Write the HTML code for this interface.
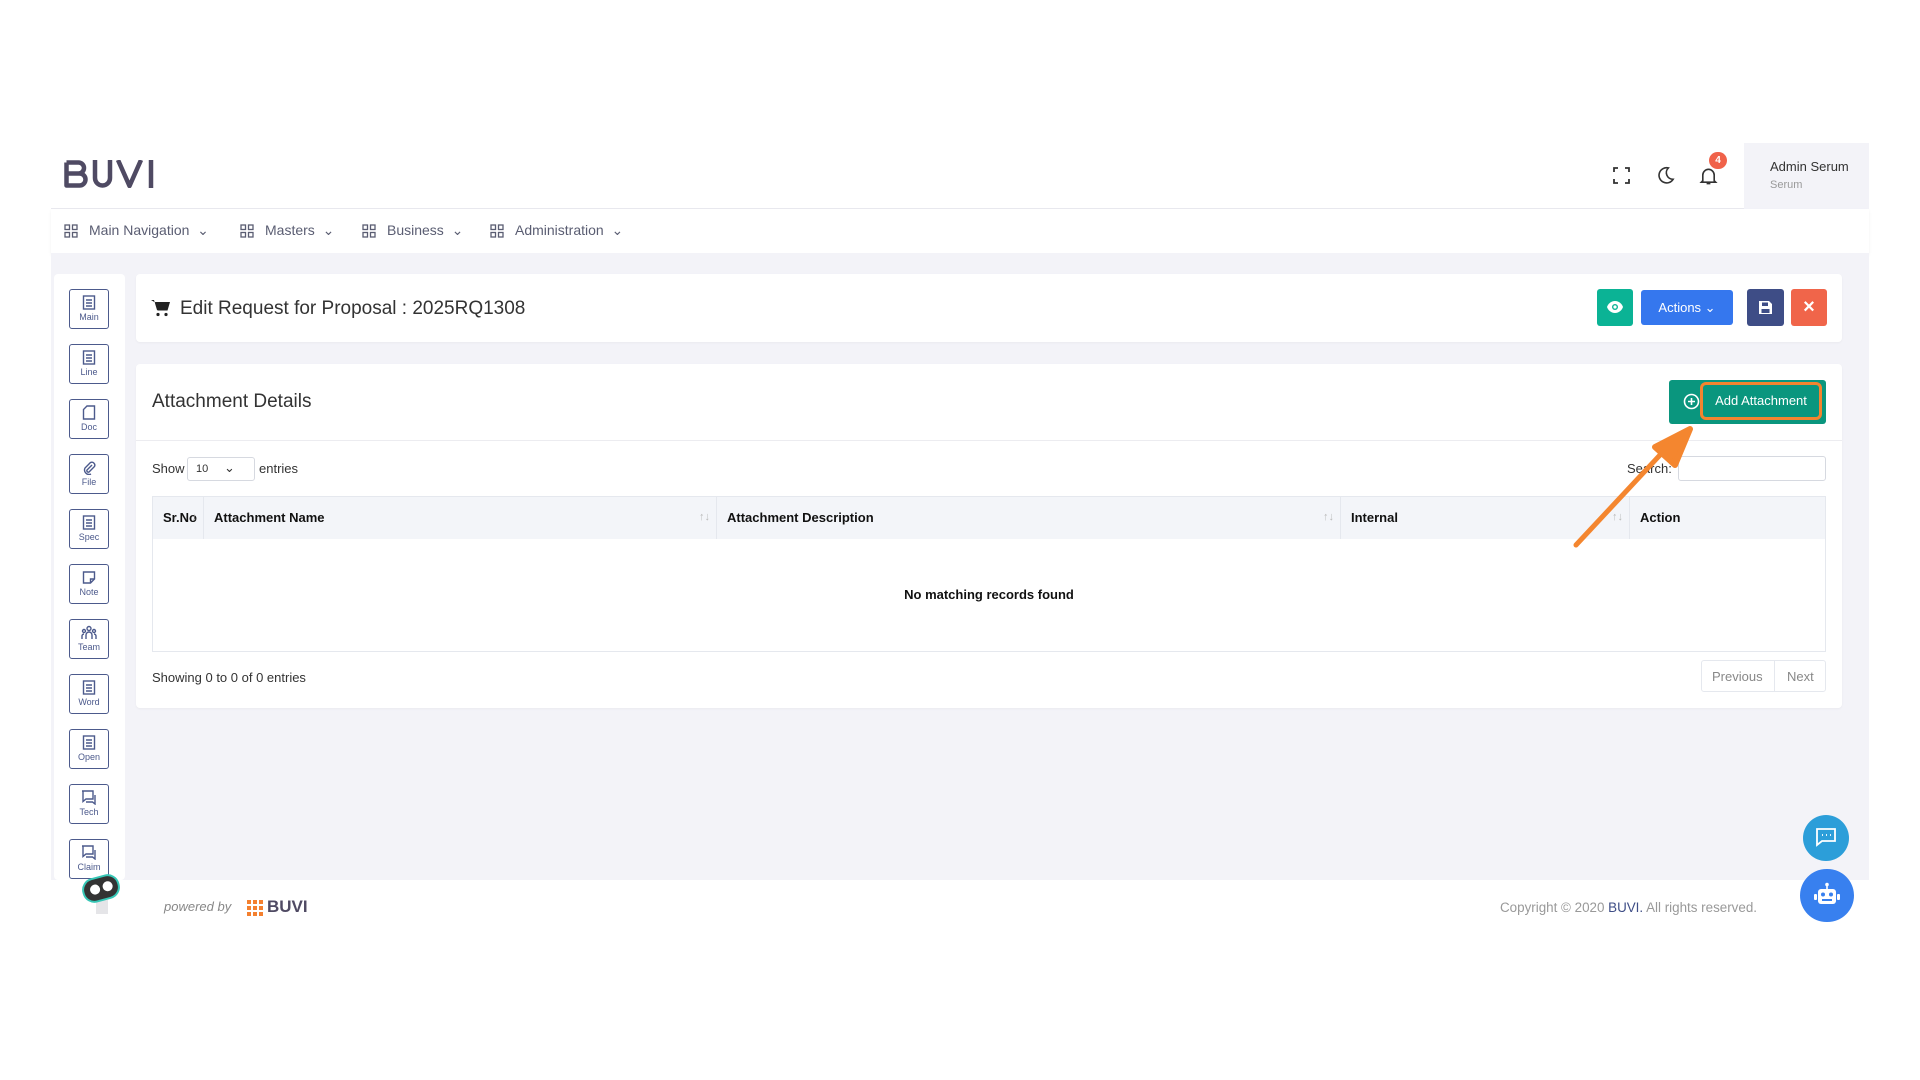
<!DOCTYPE html>
<html><head><meta charset="utf-8">
<style>
*{box-sizing:border-box;margin:0;padding:0}
body{width:1920px;height:1080px;background:#fff;font-family:"Liberation Sans",sans-serif;position:relative;overflow:hidden;color:#333}
.abs{position:absolute}
.hdr{left:51px;top:143px;width:1818px;height:66px;background:#fff;border-bottom:1px solid #e8e8ee}
.prof{left:1744px;top:143px;width:125px;height:66px;background:#f3f3f8}
.nav{left:51px;top:209px;width:1818px;height:44px;background:#fff;box-shadow:0 2px 3px rgba(0,0,0,.06)}
.nav span{position:absolute;top:13px;font-size:14px;color:#5a5d72}
.gray{left:51px;top:253px;width:1818px;height:627px;background:#f3f3f8}
.side{left:54px;top:274px;width:71px;height:606px;background:#fff;border-radius:4px}
.si{position:absolute;left:15px;width:40px;height:40px;border:1.3px solid #4c5a8c;border-radius:3px;text-align:center;color:#4c5a8c;font-size:9px}
.si svg{display:block;margin:5px auto 2px}
.card{background:#fff;border-radius:4px;box-shadow:0 1px 2px rgba(0,0,0,.04)}
.btn{position:absolute;border-radius:3px;color:#fff;font-size:13px;text-align:center}
th{font-size:13px;font-weight:bold;text-align:left;color:#111;padding-left:10px;border-right:1px solid #e5e8ee;position:relative}
th i{position:absolute;right:6px;top:14px;font-style:normal;font-size:11px;color:#bbb;font-weight:normal}
</style></head><body>
<div class="abs hdr"></div>
<svg class="abs" style="left:64px;top:160px" width="100" height="28" viewBox="0 0 100 28" fill="none" stroke="#4f4a63" stroke-width="4.5" stroke-linejoin="round"><path d="M2.5 2.5h12a5.5 5.5 0 0 1 0 11H2.5M2.5 2.5v23h13a6 6 0 0 0 0-12"/><path d="M31 0v18a7.5 7.5 0 0 0 15 0V0"/><path d="M54 0l11.5 26l11.5-26"/><path d="M87 0v28"/></svg>
<svg class="abs" style="left:1613px;top:167px" width="17" height="17" viewBox="0 0 17 17" fill="none" stroke="#333" stroke-width="1.8"><path d="M1 5V1h4M12 1h4v4M16 12v4h-4M5 16H1v-4"/></svg>
<svg class="abs" style="left:1656px;top:166px" width="19" height="19" viewBox="0 0 20 20" fill="none" stroke="#333" stroke-width="1.7"><path d="M13 2A8 8 0 1 0 18 14 7 7 0 0 1 13 2z"/></svg>
<svg class="abs" style="left:1699px;top:166px" width="19" height="20" viewBox="0 0 20 20" fill="none" stroke="#333" stroke-width="1.7"><path d="M4 15V9a6 6 0 0 1 12 0v6l1.5 1.5h-15zM8 18h4"/></svg>
<div class="abs" style="left:1709px;top:152px;width:18px;height:17px;border-radius:9px;background:#f0624a;color:#fff;font-size:10px;font-weight:bold;text-align:center;line-height:17px">4</div>
<div class="abs prof"><div style="position:absolute;left:26px;top:16px;font-size:13px;color:#333">Admin Serum</div><div style="position:absolute;left:26px;top:36px;font-size:11px;color:#999">Serum</div></div>
<div class="abs nav">
<svg class="abs" style="left:13px;top:15px" width="14" height="14" viewBox="0 0 14 14" fill="none" stroke="#5a5d72" stroke-width="1.3"><rect x="1" y="1" width="4.5" height="4.5"/><rect x="8.5" y="1" width="4.5" height="4.5"/><rect x="1" y="8.5" width="4.5" height="4.5"/><rect x="8.5" y="8.5" width="4.5" height="4.5"/></svg><span style="left:38px">Main Navigation &nbsp;⌄</span>
<svg class="abs" style="left:189px;top:15px" width="14" height="14" viewBox="0 0 14 14" fill="none" stroke="#5a5d72" stroke-width="1.3"><rect x="1" y="1" width="4.5" height="4.5"/><rect x="8.5" y="1" width="4.5" height="4.5"/><rect x="1" y="8.5" width="4.5" height="4.5"/><rect x="8.5" y="8.5" width="4.5" height="4.5"/></svg><span style="left:214px">Masters &nbsp;⌄</span>
<svg class="abs" style="left:311px;top:15px" width="14" height="14" viewBox="0 0 14 14" fill="none" stroke="#5a5d72" stroke-width="1.3"><rect x="1" y="1" width="4.5" height="4.5"/><rect x="8.5" y="1" width="4.5" height="4.5"/><rect x="1" y="8.5" width="4.5" height="4.5"/><rect x="8.5" y="8.5" width="4.5" height="4.5"/></svg><span style="left:336px">Business &nbsp;⌄</span>
<svg class="abs" style="left:439px;top:15px" width="14" height="14" viewBox="0 0 14 14" fill="none" stroke="#5a5d72" stroke-width="1.3"><rect x="1" y="1" width="4.5" height="4.5"/><rect x="8.5" y="1" width="4.5" height="4.5"/><rect x="1" y="8.5" width="4.5" height="4.5"/><rect x="8.5" y="8.5" width="4.5" height="4.5"/></svg><span style="left:464px">Administration &nbsp;⌄</span>
</div>
<div class="abs gray"></div>
<div class="abs side">
<div class="si" style="top:15px"><svg width="14" height="15" viewBox="0 0 14 15" fill="none" stroke="#4c5a8c" stroke-width="1.4"><rect x="1.5" y="1" width="11" height="13"/><path d="M4 5h6M4 8h6M4 11h6"/></svg>Main</div>
<div class="si" style="top:70px"><svg width="14" height="15" viewBox="0 0 14 15" fill="none" stroke="#4c5a8c" stroke-width="1.4"><rect x="1.5" y="1" width="11" height="13"/><path d="M4 5h6M4 8h6M4 11h6"/></svg>Line</div>
<div class="si" style="top:125px"><svg width="14" height="15" viewBox="0 0 14 15" fill="none" stroke="#4c5a8c" stroke-width="1.4"><path d="M5 1h7.5v13h-11V4.5z"/></svg>Doc</div>
<div class="si" style="top:180px"><svg width="14" height="15" viewBox="0 0 14 15" fill="none" stroke="#4c5a8c" stroke-width="1.4"><path d="M10 5l-5 5a1.5 1.5 0 0 0 2 2l5.5-5.5a3 3 0 0 0-4-4L3 8a4.5 4.5 0 0 0 6 6"/></svg>File</div>
<div class="si" style="top:235px"><svg width="14" height="15" viewBox="0 0 14 15" fill="none" stroke="#4c5a8c" stroke-width="1.4"><rect x="1.5" y="1" width="11" height="13"/><path d="M4 5h6M4 8h6M4 11h6"/></svg>Spec</div>
<div class="si" style="top:290px"><svg width="14" height="15" viewBox="0 0 14 15" fill="none" stroke="#4c5a8c" stroke-width="1.4"><path d="M1.5 2h11v7l-4 4h-7z M8.5 13V9h4"/></svg>Note</div>
<div class="si" style="top:345px"><svg width="16" height="15" viewBox="0 0 16 15" fill="none" stroke="#4c5a8c" stroke-width="1.4"><circle cx="8" cy="3.5" r="2"/><circle cx="3" cy="6" r="1.5"/><circle cx="13" cy="6" r="1.5"/><path d="M5 14v-4a3 3 0 0 1 6 0v4M1 14v-3a2 2 0 0 1 2-2M15 14v-3a2 2 0 0 0-2-2"/></svg>Team</div>
<div class="si" style="top:400px"><svg width="14" height="15" viewBox="0 0 14 15" fill="none" stroke="#4c5a8c" stroke-width="1.4"><rect x="1.5" y="1" width="11" height="13"/><path d="M4 5h6M4 8h6M4 11h6"/></svg>Word</div>
<div class="si" style="top:455px"><svg width="14" height="15" viewBox="0 0 14 15" fill="none" stroke="#4c5a8c" stroke-width="1.4"><rect x="1.5" y="1" width="11" height="13"/><path d="M4 5h6M4 8h6M4 11h6"/></svg>Open</div>
<div class="si" style="top:510px"><svg width="16" height="15" viewBox="0 0 16 15" fill="none" stroke="#4c5a8c" stroke-width="1.4"><path d="M1 1h11v8H5l-3 2.5V1zM14 5v9l-2.5-2H5"/></svg>Tech</div>
<div class="si" style="top:565px"><svg width="16" height="15" viewBox="0 0 16 15" fill="none" stroke="#4c5a8c" stroke-width="1.4"><path d="M1 1h11v8H5l-3 2.5V1zM14 5v9l-2.5-2H5"/></svg>Claim</div>
</div>
<!-- title card -->
<div class="abs card" style="left:136px;top:274px;width:1706px;height:68px"></div>
<svg class="abs" style="left:151px;top:299px" width="19" height="18" viewBox="0 0 19 18"><path d="M0 1h3l3 10h10l2-7H5" fill="#222"/><path d="M4 3h15l-2.5 8.5H6.5z" fill="#222"/><circle cx="7" cy="15.5" r="1.6" fill="#222"/><circle cx="15" cy="15.5" r="1.6" fill="#222"/></svg>
<div class="abs" style="left:180px;top:298px;font-size:19px;color:#333">Edit Request for Proposal : 2025RQ1308</div>
<div class="btn" style="left:1597px;top:289px;width:36px;height:37px;background:#0bb395"><svg style="margin-top:11px" width="18" height="14" viewBox="0 0 18 14"><path d="M9 1C5 1 2 4 1 7c1 3 4 6 8 6s7-3 8-6c-1-3-4-6-8-6z" fill="#fff"/><circle cx="9" cy="7" r="3" fill="#0bb395"/><circle cx="9" cy="7" r="1.6" fill="#fff"/></svg></div>
<div class="btn" style="left:1641px;top:290px;width:92px;height:35px;background:#3577ee;line-height:35px">Actions ⌄</div>
<div class="btn" style="left:1747px;top:289px;width:37px;height:37px;background:#3e4d86"><svg style="margin-top:11px" width="15" height="15" viewBox="0 0 15 15"><path d="M1 1h10l3 3v10H1z" fill="#fff"/><rect x="4" y="2.5" width="6" height="3.5" fill="#3e4d86"/><rect x="3.5" y="9" width="8" height="4" fill="#3e4d86"/></svg></div>
<div class="btn" style="left:1791px;top:289px;width:36px;height:37px;background:#f0654a;font-size:20px;line-height:36px;font-weight:bold">×</div>
<!-- attachment card -->
<div class="abs card" style="left:136px;top:364px;width:1706px;height:344px"></div>
<div class="abs" style="left:152px;top:391px;font-size:19px;color:#333">Attachment Details</div>
<div class="abs" style="left:136px;top:440px;width:1706px;height:1px;background:#ececf0"></div>
<div class="btn" style="left:1669px;top:380px;width:157px;height:44px;background:#0a967e"></div>
<svg class="abs" style="left:1683px;top:393px" width="17" height="17" viewBox="0 0 17 17" fill="none" stroke="#fff" stroke-width="1.6"><circle cx="8.5" cy="8.5" r="7"/><path d="M8.5 5v7M5 8.5h7"/></svg>
<div class="abs" style="left:1700px;top:382px;width:122px;height:38px;border:3px solid #f4842f;border-radius:6px;color:#fff;font-size:13px;line-height:32px;text-align:center">Add Attachment</div>
<div class="abs" style="left:152px;top:461px;font-size:13px">Show</div>
<div class="abs" style="left:187px;top:457px;width:68px;height:24px;border:1px solid #d6d9e0;border-radius:3px;font-size:11px;padding:5px 0 0 8px">10 <span style="position:absolute;left:36px;top:2px;font-size:13px">⌄</span></div>
<div class="abs" style="left:259px;top:461px;font-size:13px">entries</div>
<div class="abs" style="left:1627px;top:461px;font-size:13px">Search:</div>
<div class="abs" style="left:1678px;top:456px;width:148px;height:25px;border:1px solid #d6d9e0;border-radius:3px;background:#fff"></div>
<table class="abs" style="left:152px;top:496px;width:1674px;border-collapse:collapse;border:1px solid #e5e8ee">
<tr style="height:42px;background:#f3f5f9"><th style="width:51px">Sr.No<i>↓</i></th><th style="width:513px">Attachment Name<i>↑↓</i></th><th style="width:624px">Attachment Description<i>↑↓</i></th><th style="width:289px">Internal<i>↑↓</i></th><th style="border-right:0">Action</th></tr>
<tr style="height:113px"><td colspan="5" style="text-align:center;font-size:13px;font-weight:bold;color:#111">No matching records found</td></tr>
</table>
<div class="abs" style="left:152px;top:670px;font-size:13px">Showing 0 to 0 of 0 entries</div>
<div class="abs" style="left:1701px;top:660px;width:125px;height:32px;border:1px solid #e5e8ee;border-radius:3px;font-size:13px;color:#888"><span style="position:absolute;left:10px;top:8px">Previous</span><span style="position:absolute;left:72px;top:0;width:1px;height:30px;background:#e5e8ee"></span><span style="position:absolute;left:85px;top:8px">Next</span></div>
<!-- arrow -->
<svg class="abs" style="left:1560px;top:420px" width="150" height="140" viewBox="1560 420 150 140"><path d="M1576 545L1660 455" stroke="#f4862f" stroke-width="5" stroke-linecap="round"/><path d="M1690 429L1655 447L1675 465z" fill="#f4862f" stroke="#f4862f" stroke-width="6" stroke-linejoin="round"/></svg>
<!-- footer -->
<div class="abs" style="left:164px;top:899px;font-size:13px;font-style:italic;color:#888">powered by</div>
<svg class="abs" style="left:247px;top:900px" width="16" height="16" viewBox="0 0 16 16" fill="#f4802f"><rect x="0" y="0" width="4" height="4"/><rect x="6" y="0" width="4" height="4"/><rect x="12" y="0" width="4" height="4"/><rect x="0" y="6" width="4" height="4"/><rect x="6" y="6" width="4" height="4"/><rect x="12" y="6" width="4" height="4"/><rect x="0" y="12" width="4" height="4"/><rect x="6" y="12" width="4" height="4"/><rect x="12" y="12" width="4" height="4"/></svg>
<div class="abs" style="left:267px;top:897px;font-size:17px;font-weight:bold;color:#4f4a63">BUVI</div>
<div class="abs" style="right:163px;top:900px;font-size:13.4px;color:#999;white-space:nowrap">Copyright © 2020 <span style="color:#3e4d86">BUVI.</span> All rights reserved.</div>
<!-- mascot -->
<div class="abs" style="left:96px;top:900px;width:12px;height:14px;background:#e5e5e8"></div>
<div class="abs" style="left:82px;top:876px;width:38px;height:25px;border-radius:12px;background:#333;border:2px solid #36c7b6;transform:rotate(-15deg)"><span style="position:absolute;left:6px;top:5px;width:10px;height:10px;border-radius:5px;background:#fff"></span><span style="position:absolute;left:19px;top:5px;width:10px;height:10px;border-radius:5px;background:#fff"></span></div>
<!-- floating -->
<div class="abs" style="left:1803px;top:815px;width:46px;height:46px;border-radius:23px;background:#2c9ed9"><svg style="margin:13px 0 0 13px" width="20" height="19" viewBox="0 0 20 19" fill="none" stroke="#fff" stroke-width="1.8"><path d="M1 1h18v12H6l-5 4z"/><path d="M6 7h1M10 7h1M14 7h1"/></svg></div>
<div class="abs" style="left:1800px;top:869px;width:54px;height:53px;border-radius:27px;background:#3880ef"><svg style="margin:13px 0 0 14px" width="26" height="26" viewBox="0 0 26 26" fill="#fff"><circle cx="13" cy="2.5" r="1.8"/><rect x="12.2" y="3" width="1.6" height="4"/><rect x="4" y="7" width="18" height="15" rx="3"/><rect x="0" y="12" width="3" height="6" rx="1"/><rect x="23" y="12" width="3" height="6" rx="1"/><circle cx="9" cy="12.5" r="2" fill="#3880ef"/><circle cx="17" cy="12.5" r="2" fill="#3880ef"/><rect x="8" y="17" width="10" height="2" fill="#3880ef"/></svg></div>
</body></html>
